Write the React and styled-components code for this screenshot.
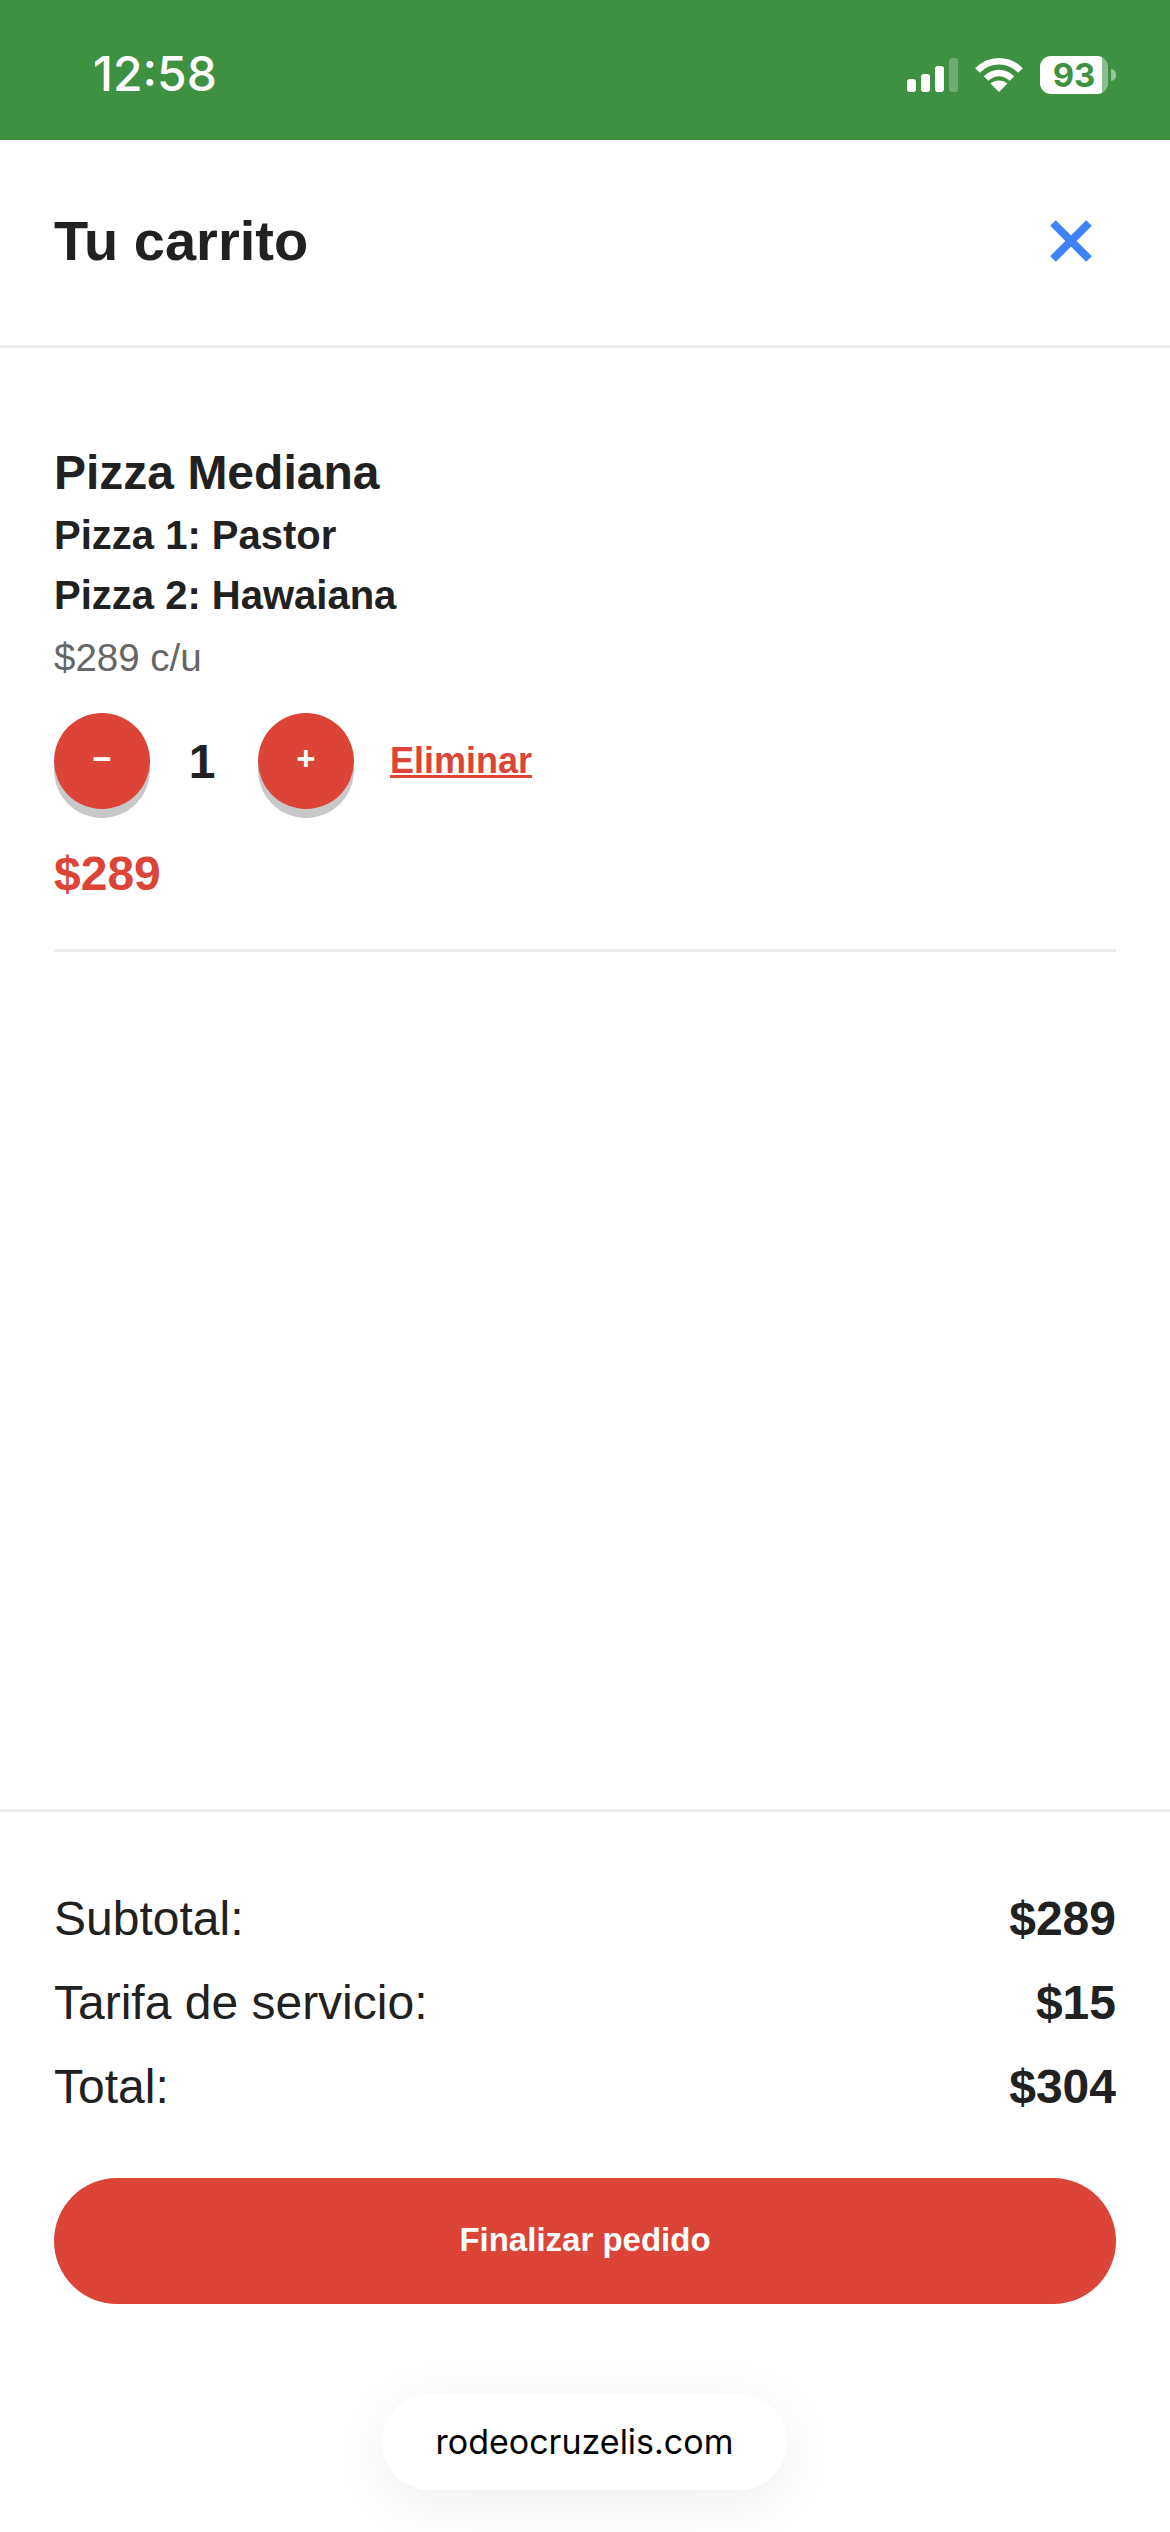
import styled, { createGlobalStyle } from "styled-components";

const GlobalStyle = createGlobalStyle`
  html, body {
    margin: 0;
    padding: 0;
    background: #fff;
  }
  * {
    box-sizing: border-box;
  }
`;

const SignalIcon = () => (
  <svg width="51" height="34" viewBox="0 0 51 34">
    <rect x="0" y="21" width="9" height="13" rx="3" fill="#fff" />
    <rect x="14" y="16" width="9" height="18" rx="3" fill="#fff" />
    <rect x="28" y="8" width="9" height="26" rx="3" fill="#fff" />
    <rect x="42" y="0" width="9" height="34" rx="3" fill="#fff" opacity="0.25" />
  </svg>
);

const WifiIcon = () => (
  <svg width="48" height="36" viewBox="0 0 48 36">
    <path d="M2.5 14.5 C14.5 2 33.5 2 45.5 14.5" fill="none" stroke="#fff" strokeWidth="6.5" />
    <path d="M11 22.5 C18.5 15 29.5 15 37 22.5" fill="none" stroke="#fff" strokeWidth="6.5" />
    <path d="M24 36 L15.5 27.5 C20 23.5 28 23.5 32.5 27.5 Z" fill="#fff" />
  </svg>
);

const CloseIcon = () => (
  <svg width="44" height="42" viewBox="0 0 44 42">
    <path d="M4 3 L40 39 M40 3 L4 39" stroke="#3f83f8" strokeWidth="8" fill="none" />
  </svg>
);

const Cart = () => {
  const rows = [
    { label: "Subtotal:", value: "$289" },
    { label: "Tarifa de servicio:", value: "$15" },
    { label: "Total:", value: "$304" },
  ];

  return (
    <Page>
      <GlobalStyle />
      <StatusBar>
        <Clock>12:58</Clock>
        <StatusIcons>
          <SignalIcon />
          <WifiIcon />
          <Battery>93</Battery>
          <BatteryCap />
        </StatusIcons>
      </StatusBar>

      <Header>
        <Title>Tu carrito</Title>
        <CloseButton>
          <CloseIcon />
        </CloseButton>
      </Header>

      <Items>
        <Item>
          <ItemName>Pizza Mediana</ItemName>
          <Flavor>Pizza 1: Pastor</Flavor>
          <Flavor>Pizza 2: Hawaiana</Flavor>
          <UnitPrice>$289 c/u</UnitPrice>
          <Controls>
            <RoundButton>−</RoundButton>
            <Quantity>1</Quantity>
            <RoundButton>+</RoundButton>
            <RemoveLink>Eliminar</RemoveLink>
          </Controls>
          <ItemTotal>$289</ItemTotal>
        </Item>
      </Items>

      <Summary>
        {rows.map((row) => (
          <SummaryRow key={row.label}>
            <span>{row.label}</span>
            <strong>{row.value}</strong>
          </SummaryRow>
        ))}
        <CheckoutButton>Finalizar pedido</CheckoutButton>
      </Summary>

      <AddressPill>rodeocruzelis.com</AddressPill>
    </Page>
  );
};

const Page = styled.div`
  position: relative;
  display: flex;
  flex-direction: column;
  width: 1170px;
  height: 2532px;
  overflow: hidden;
  background: #fff;
  color: #212121;
  font-family: "Liberation Sans", Arial, sans-serif;
`;

const StatusBar = styled.div`
  display: flex;
  justify-content: space-between;
  align-items: flex-start;
  height: 140px;
  padding: 48px 54px 0 93px;
  background: #3f9142;
  color: #fff;
`;

const Clock = styled.div`
  font-family: Inter, sans-serif;
  font-size: 48px;
  font-weight: 500;
  line-height: 52px;
`;

const StatusIcons = styled.div`
  display: flex;
  align-items: flex-end;
  height: 44px;
  gap: 17px;
  padding-top: 7px;
  svg {
    display: block;
  }
`;

const Battery = styled.div`
  width: 68px;
  height: 38px;
  margin-bottom: -2px;
  border-radius: 11px;
  background: linear-gradient(to right, #fff 91%, rgba(255, 255, 255, 0.4) 91%);
  color: #3f9142;
  font-family: Inter, sans-serif;
  font-size: 33px;
  font-weight: 700;
  line-height: 38px;
  text-align: center;
`;

const BatteryCap = styled.div`
  width: 5px;
  height: 12px;
  margin: 0 0 11px -14px;
  border-radius: 0 6px 6px 0;
  background: rgba(255, 255, 255, 0.45);
`;

const Header = styled.div`
  display: flex;
  justify-content: space-between;
  align-items: center;
  height: 208px;
  padding: 0 54px 3px;
  border-bottom: 3px solid #eee;
`;

const Title = styled.h1`
  margin: 0;
  font-size: 56px;
  font-weight: 700;
  line-height: 66px;
`;

const CloseButton = styled.button`
  display: flex;
  margin-right: 23px;
  padding: 0;
  border: none;
  background: none;
`;

const Items = styled.div`
  flex: 1;
  padding: 95px 54px 0;
`;

const Item = styled.div`
  padding-bottom: 45px;
  border-bottom: 3px solid #eee;
`;

const ItemName = styled.div`
  margin-bottom: 2px;
  font-size: 48px;
  font-weight: 700;
  line-height: 60px;
`;

const Flavor = styled.div`
  font-size: 40px;
  font-weight: 700;
  line-height: 60px;
`;

const UnitPrice = styled.div`
  margin-top: 3px;
  color: #666;
  font-size: 38.5px;
  line-height: 60px;
`;

const Controls = styled.div`
  display: flex;
  align-items: center;
  margin-top: 25px;
`;

const RoundButton = styled.button`
  display: flex;
  justify-content: center;
  align-items: center;
  width: 96px;
  height: 96px;
  padding: 0 0 4px;
  border: none;
  border-radius: 50%;
  background: #db4437;
  box-shadow: 0 9px 0 #c8c8c8;
  color: #fff;
  font-family: "Liberation Sans", Arial, sans-serif;
  font-size: 33px;
  font-weight: 700;
`;

const Quantity = styled.div`
  width: 108px;
  padding-right: 4px;
  font-size: 48px;
  font-weight: 700;
  text-align: center;
`;

const RemoveLink = styled.a`
  margin-left: 36px;
  color: #db4437;
  font-size: 36px;
  font-weight: 700;
  text-decoration: underline;
`;

const ItemTotal = styled.div`
  margin-top: 35px;
  color: #db4437;
  font-size: 48px;
  font-weight: 700;
  line-height: 60px;
`;

const Summary = styled.div`
  display: flex;
  flex-direction: column;
  height: 723px;
  padding: 64px 54px 0;
  border-top: 3px solid #eee;
`;

const SummaryRow = styled.div`
  display: flex;
  justify-content: space-between;
  align-items: center;
  height: 84px;
  font-size: 48px;
  strong {
    font-weight: 700;
  }
`;

const CheckoutButton = styled.button`
  height: 126px;
  margin-top: 50px;
  padding: 0 0 2px;
  border: none;
  border-radius: 63px;
  background: #db4437;
  color: #fff;
  font-family: "Liberation Sans", Arial, sans-serif;
  font-size: 33px;
  font-weight: 700;
`;

const AddressPill = styled.div`
  position: absolute;
  left: 382px;
  bottom: 42px;
  width: 405px;
  height: 96px;
  border-radius: 48px;
  background: #fff;
  box-shadow: 0 12px 60px rgba(0, 0, 0, 0.07);
  color: #000;
  font-family: Inter, sans-serif;
  font-size: 34px;
  line-height: 96px;
  text-align: center;
`;

export default Cart;
